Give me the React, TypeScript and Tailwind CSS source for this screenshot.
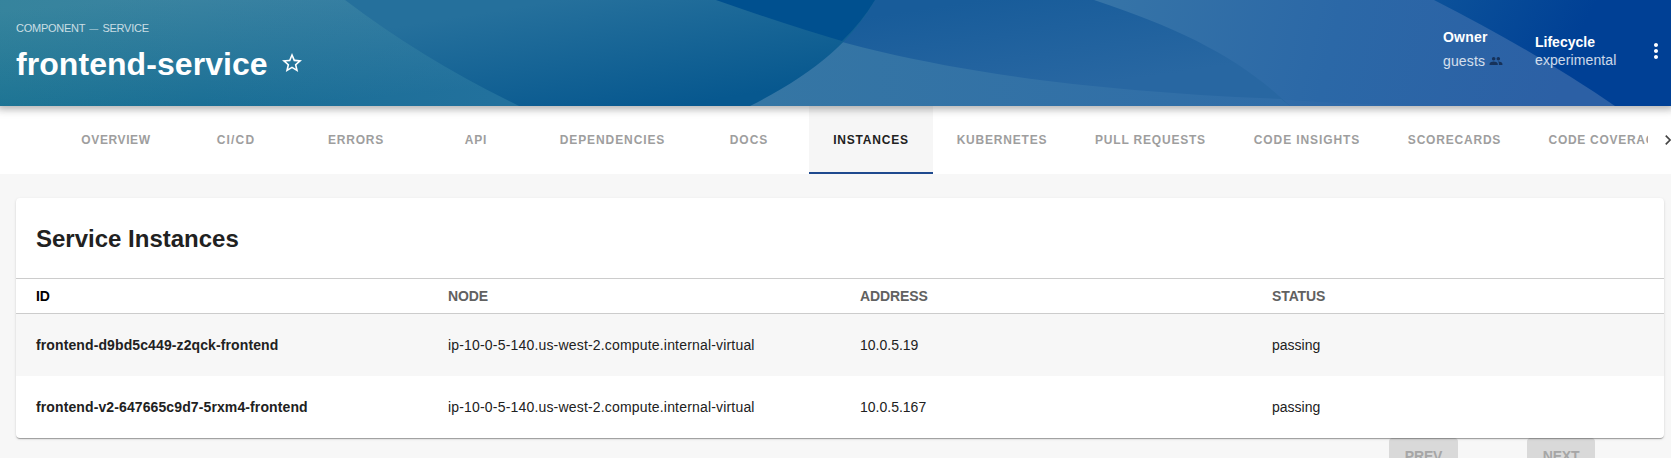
import React from "react";

const tabs = [
  { label: "OVERVIEW", width: "w-[120px]", tracking: "tracking-[0.6px]" },
  { label: "CI/CD", width: "w-[120px]", tracking: "tracking-[1.15px]" },
  { label: "ERRORS", width: "w-[120px]", tracking: "tracking-[0.8px]" },
  { label: "API", width: "w-[120px]", tracking: "tracking-[0.8px]" },
  { label: "DEPENDENCIES", width: "w-[153px]", tracking: "tracking-[0.9px]" },
  { label: "DOCS", width: "w-[120px]", tracking: "tracking-[1px]" },
  { label: "INSTANCES", width: "w-[124px]", tracking: "tracking-[0.8px]", active: true },
  { label: "KUBERNETES", width: "w-[138px]", tracking: "tracking-[0.8px]" },
  { label: "PULL REQUESTS", width: "w-[159px]", tracking: "tracking-[0.8px]" },
  { label: "CODE INSIGHTS", width: "w-[154px]", tracking: "tracking-[0.9px]" },
  { label: "SCORECARDS", width: "w-[141px]", tracking: "tracking-[0.8px]" },
  { label: "CODE COVERAGE", width: "w-[163px]", tracking: "tracking-[0.7px]" },
];

const columns = ["ID", "NODE", "ADDRESS", "STATUS"];

const cellTracking = ["font-bold tracking-[0.11px]", "tracking-[0.18px]", "", ""];

const rows = [
  ["frontend-d9bd5c449-z2qck-frontend", "ip-10-0-5-140.us-west-2.compute.internal-virtual", "10.0.5.19", "passing"],
  ["frontend-v2-647665c9d7-5rxm4-frontend", "ip-10-0-5-140.us-west-2.compute.internal-virtual", "10.0.5.167", "passing"],
];

function Waves() {
  return (
    <svg className="absolute inset-0 h-full w-full" viewBox="0 0 1671 106" preserveAspectRatio="none" aria-hidden="true">
      <defs>
        <linearGradient id="base" gradientUnits="userSpaceOnUse" x1="1430" y1="0" x2="1560" y2="70">
          <stop offset="0" stopColor="#0c529a" />
          <stop offset="1" stopColor="#004095" />
        </linearGradient>
        <linearGradient id="right" gradientUnits="userSpaceOnUse" x1="1100" y1="0" x2="1560" y2="106">
          <stop offset="0" stopColor="#3674a7" />
          <stop offset="0.5" stopColor="#2b68a7" />
          <stop offset="1" stopColor="#2c60a5" />
        </linearGradient>
        <linearGradient id="middle" gradientUnits="userSpaceOnUse" x1="980" y1="0" x2="995" y2="100">
          <stop offset="0" stopColor="#185c9a" />
          <stop offset="1" stopColor="#2867a2" />
        </linearGradient>
        <linearGradient id="lower" gradientUnits="userSpaceOnUse" x1="760" y1="0" x2="1290" y2="0">
          <stop offset="0" stopColor="#3576a4" />
          <stop offset="1" stopColor="#306da8" />
        </linearGradient>
        <linearGradient id="second" gradientUnits="userSpaceOnUse" x1="620" y1="-10" x2="640" y2="112">
          <stop offset="0" stopColor="#25709c" />
          <stop offset="1" stopColor="#07588f" />
        </linearGradient>
        <linearGradient id="first" gradientUnits="userSpaceOnUse" x1="190" y1="-5" x2="200" y2="112">
          <stop offset="0" stopColor="#3a83a1" />
          <stop offset="1" stopColor="#196e95" />
        </linearGradient>
        <linearGradient id="tint" gradientUnits="userSpaceOnUse" x1="0" y1="0" x2="500" y2="0">
          <stop offset="0" stopColor="#108a78" stopOpacity="0.1" />
          <stop offset="0.4" stopColor="#108a78" stopOpacity="0" />
          <stop offset="0.4" stopColor="#3878b0" stopOpacity="0" />
          <stop offset="1" stopColor="#3878b0" stopOpacity="0.3" />
        </linearGradient>
      </defs>
      <rect width="1671" height="106" fill="url(#base)" />
      <path d="M0 0H1434Q1536 52 1615 106H0Z" fill="url(#right)" />
      <path d="M1200 94Q1310 103 1420 106H1200Z" fill="#ffffff" fillOpacity="0.02" />
      <path d="M0 0H1094C1185 30 1242 60 1290 106H0Z" fill="url(#middle)" />
      <path d="M716 0C850 54 1010 88 1281 99L1290 106H700V0Z" fill="url(#lower)" />
      <path d="M0 0H875C851 43 811 75 750 106H0Z" fill="url(#second)" />
      <path d="M716 0H875Q862 22 842 41Q790 26 716 0Z" fill="#00508f" />
      <path d="M0 0H345Q424 60 519 106H0Z" fill="url(#first)" />
      <path d="M0 0H345Q424 60 519 106H0Z" fill="url(#tint)" />
    </svg>
  );
}

function Header() {
  return (
    <header className="relative z-10 h-[106px] shrink-0 shadow-[0_0_8px_3px_rgba(20,20,20,0.35)]">
      <Waves />
      <div className="relative flex h-full justify-between pl-4 text-white">
        <div className="flex flex-col pt-5">
          <p className="h-4 text-[11px] leading-4 tracking-[-0.25px] text-white/75">
            COMPONENT <span className="mx-[1.5px] text-[9px] leading-none">—</span> SERVICE
          </p>
          <div className="mt-2.5 flex items-center gap-3">
            <h1 className="text-[32px] leading-9 font-bold tracking-[0.06px]">frontend-service</h1>
            <svg className="-mt-0.5 size-6" viewBox="0 0 24 24" fill="currentColor">
              <path d="M22 9.24l-7.19-.62L12 2 9.19 8.63 2 9.24l5.46 4.73L5.82 21 12 17.27 18.18 21l-1.63-7.03L22 9.24zM12 15.4l-3.76 2.27 1-4.28-3.32-2.88 4.38-.38L12 6.1l1.71 4.04 4.38.38-3.32 2.88 1 4.28L12 15.4z" />
            </svg>
          </div>
        </div>
        <div className="flex text-sm">
          <div className="w-[92px] pt-[27px]">
            <p className="leading-5 font-bold tracking-[0.2px]">Owner</p>
            <p className="mt-1 flex items-center gap-[3.5px] leading-5 tracking-[0.15px] text-white/80">
              guests
              <svg className="size-3.5 text-[#16325a]" viewBox="0 0 24 24" fill="currentColor">
                <path d="M16 11c1.66 0 2.99-1.34 2.99-3S17.66 5 16 5c-1.66 0-3 1.34-3 3s1.34 3 3 3zm-8 0c1.66 0 2.99-1.34 2.99-3S9.66 5 8 5C6.34 5 5 6.34 5 8s1.34 3 3 3zm0 2c-2.33 0-7 1.17-7 3.5V19h14v-2.5c0-2.33-4.67-3.5-7-3.5zm8 0c-.29 0-.62.02-.97.05 1.16.84 1.97 1.97 1.97 3.45V19h6v-2.5c0-2.33-4.67-3.5-7-3.5z" />
              </svg>
            </p>
          </div>
          <div className="w-[109px] pt-8">
            <p className="leading-5 font-bold">Lifecycle</p>
            <p className="-mt-0.5 leading-5 tracking-[0.1px] text-white/80">experimental</p>
          </div>
          <svg className="mt-[39px] mr-[3px] size-6" viewBox="0 0 24 24" fill="currentColor">
            <path d="M12 8c1.1 0 2-.9 2-2s-.9-2-2-2-2 .9-2 2 .9 2 2 2zm0 2c-1.1 0-2 .9-2 2s.9 2 2 2 2-.9 2-2-.9-2-2-2zm0 6c-1.1 0-2 .9-2 2s.9 2 2 2 2-.9 2-2-.9-2-2-2z" />
          </svg>
        </div>
      </div>
    </header>
  );
}

function TabBar() {
  return (
    <nav className="flex h-[68px] shrink-0 overflow-hidden bg-white">
      <div className="flex w-[1648px] shrink-0 overflow-hidden pl-14">
        {tabs.map((tab) => (
          <div
            key={tab.label}
            className={`flex shrink-0 items-center justify-center border-b-2 pt-px text-xs font-bold whitespace-nowrap ${tab.tracking} ${tab.width} ${
              tab.active ? "border-[#1f4a8f] bg-[#f6f6f6] text-[#212121]" : "border-transparent text-[#9e9e9e]"
            }`}
          >
            {tab.label}
          </div>
        ))}
      </div>
      <div className="flex w-10 shrink-0 items-center justify-center text-[#444]">
        <svg className="size-5" viewBox="0 0 24 24" fill="currentColor">
          <path d="M8.59 16.59L13.17 12 8.59 7.41 10 6l6 6-6 6-1.41-1.41z" />
        </svg>
      </div>
    </nav>
  );
}

function InstancesCard() {
  return (
    <section className="relative z-10 h-[240px] w-[1648px] shrink-0 rounded bg-white text-sm text-[#212121] shadow-[0_2px_1px_-1px_rgba(0,0,0,0.2),0_1px_1px_0_rgba(0,0,0,0.14),0_1px_3px_0_rgba(0,0,0,0.12)]">
      <div className="flex h-20 items-center px-5 pt-0.5">
        <h2 className="text-2xl font-bold">Service Instances</h2>
      </div>
      <div className="grid h-9 grid-cols-4 items-center border-y border-[#cccccc] font-bold tracking-[-0.1px] text-[#616161]">
        {columns.map((column) => (
          <div key={column} className="px-5 first:text-black">
            {column}
          </div>
        ))}
      </div>
      {rows.map((row) => (
        <div key={row[0]} className="grid h-[62px] grid-cols-4 items-center odd:bg-[#f7f7f7]">
          {row.map((cell, index) => (
            <div key={index} className={`px-5 whitespace-nowrap ${cellTracking[index]}`}>
              {cell}
            </div>
          ))}
        </div>
      ))}
    </section>
  );
}

export default function App() {
  return (
    <div className="flex h-[458px] w-full flex-col overflow-hidden bg-[#f7f7f7] font-['Liberation_Sans',Arial,sans-serif]">
      <Header />
      <TabBar />
      <main className="flex flex-col px-4 pt-6">
        <InstancesCard />
        <div className="flex gap-[69px] pl-[1373px] text-sm font-bold tracking-[-0.2px] text-[#a6a6a6]">
          <div className="flex h-9 w-[69px] shrink-0 items-center justify-center rounded bg-[#d9d9d9]">PREV</div>
          <div className="flex h-9 w-[68px] shrink-0 items-center justify-center rounded bg-[#d9d9d9]">NEXT</div>
        </div>
      </main>
    </div>
  );
}
